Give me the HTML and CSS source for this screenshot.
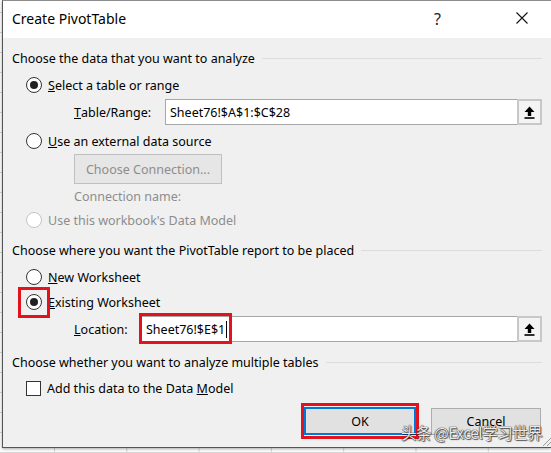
FILE: index.html
```html
<!DOCTYPE html>
<html>
<head>
<meta charset="utf-8">
<link rel="stylesheet" href="styles.css">
</head>
<body>
<div class="dialog">
  <div class="titlebar">
    <span class="title">Create PivotTable</span>
    <span class="help">?</span>
    <span class="close"><svg width="12" height="12" viewBox="0 0 12 12"><path d="M0.5 0.5 L11.5 11.5 M11.5 0.5 L0.5 11.5" stroke="#111" stroke-width="1.1" fill="none"/></svg></span>
  </div>
  <div class="body">
    <div class="group-h h1"><span>Choose the data that you want to analyze</span><i class="rule"></i></div>
    <div class="opt o1"><span class="radio on"></span><span><u>S</u>elect a table or range</span></div>
    <div class="field f-range">
      <span class="lbl lbl-range"><u>T</u>able/Range:</span>
      <div class="input">Sheet76!$A$1:$C$28</div>
      <span class="pick"><svg width="11" height="13" viewBox="0 0 11 13"><path d="M5.5 0.5 L10.5 6 H7.2 V10 H3.8 V6 H0.5 Z" fill="#000"/><rect x="0.5" y="11.2" width="10" height="1.6" fill="#000"/></svg></span>
    </div>
    <div class="opt o2"><span class="radio"></span><span><u>U</u>se an external data source</span></div>
    <div class="conn-row"><span class="btn-disabled">Choose Connection...</span></div>
    <div class="conn-name">Connection name:</div>
    <div class="opt o3 disabled"><span class="radio dis"></span><span>Use this workbook's Data Model</span></div>

    <div class="group-h h2"><span>Choose where you want the PivotTable report to be placed</span><i class="rule"></i></div>
    <div class="opt o4"><span class="radio"></span><span><u>N</u>ew Worksheet</span></div>
    <div class="opt o5"><span class="radio on mark"><i class="hl hl-radio"></i></span><span><u>E</u>xisting Worksheet</span></div>
    <div class="field f-loc">
      <span class="lbl lbl-loc"><u>L</u>ocation:</span>
      <div class="input loc-input"><i class="hl hl-loc"></i>Sheet76!$E$1<span class="caret"></span></div>
      <span class="pick"><svg width="11" height="13" viewBox="0 0 11 13"><path d="M5.5 0.5 L10.5 6 H7.2 V10 H3.8 V6 H0.5 Z" fill="#000"/><rect x="0.5" y="11.2" width="10" height="1.6" fill="#000"/></svg></span>
    </div>

    <div class="group-h h3"><span>Choose whether you want to analyze multiple tables</span><i class="rule"></i></div>
    <div class="opt o6"><span class="check"></span><span>Add this data to the Data <u>M</u>odel</span></div>

    <div class="footer">
      <span class="btn ok"><i class="hl hl-ok"></i>OK</span>
      <span class="btn cancel">Cancel</span>
    </div>
  </div>
  <span class="grip"><svg width="10" height="10" viewBox="0 0 10 10"><path d="M9 1 L1 9 M9 5 L5 9" stroke="#999" stroke-width="1" fill="none"/></svg></span>
  <span class="watermark">头条 @Excel学习世界</span>
</div>
</body>
</html>
```

FILE: styles.css
```css
html, body {
  margin: 0;
  padding: 0;
}
body {
  width: 551px;
  height: 453px;
  overflow: hidden;
  font-family: "Noto Sans", "Noto Sans CJK SC", sans-serif;
  font-size: 12.5px;
  color: #000;
  background-color: #fff;
  background-image:
    linear-gradient(to right, #d6d6d6 1px, transparent 1px),
    linear-gradient(to bottom, #d6d6d6 1px, transparent 1px);
  background-size: 72.3px 20px, 72.3px 20px;
  background-position: 54px 0, 0 12px;
}
.dialog {
  position: relative;
  margin: 0 0 0 2px;
  width: 549px;
  height: 448px;
  box-sizing: border-box;
  border-left: 1px solid #555;
  border-top: 1px solid #8c8c8c;
  border-bottom: 1px solid #555;
  background: #f0f0f0;
  display: flex;
  flex-direction: column;
  box-shadow: 0 1px 3px rgba(0,0,0,0.35);
}
.titlebar {
  height: 37px;
  background: #fff;
  display: flex;
  align-items: center;
  padding-left: 9px;
  flex: none;
}
.title {
  font-size: 14px;
  flex: 1;
  position: relative;
  top: -1px;
}
.help {
  font-size: 16px;
  color: #222;
  width: 12px;
  margin-right: 70px;
  position: relative;
  top: -1px;
}
.close {
  width: 12px;
  height: 12px;
  margin-right: 23px;
  display: flex;
  position: relative;
  top: -2px;
}
.body {
  padding: 8px 9px 0 9px;
  display: flex;
  flex-direction: column;
}
.group-h {
  height: 24px;
  display: flex;
  align-items: center;
  white-space: nowrap;
}
.rule {
  flex: 1;
  height: 1px;
  background: #dcdcdc;
  margin-left: 7px;
}
.opt {
  height: 24px;
  display: flex;
  align-items: center;
  padding-left: 14px;
  gap: 6px;
  white-space: nowrap;
}
.radio {
  position: relative;
  width: 16px;
  height: 16px;
  box-sizing: border-box;
  border: 1px solid #333;
  border-radius: 50%;
  background: #fff;
  flex: none;
}
.radio.on::after {
  content: "";
  position: absolute;
  left: 3px;
  top: 3px;
  width: 8px;
  height: 8px;
  border-radius: 50%;
  background: #222;
}
.radio.dis {
  border-color: #c4c4c4;
}
.check {
  width: 15px;
  height: 15px;
  box-sizing: border-box;
  border: 1px solid #333;
  background: #fff;
  flex: none;
}
.disabled {
  color: #8d8d8d;
}
.o1 { margin-top: 3px; }
.field {
  height: 26px;
  display: flex;
  align-items: stretch;
  padding-left: 62px;
}
.f-range { margin-top: 2px; }
.lbl {
  display: flex;
  align-items: center;
  flex: none;
}
.lbl-range { width: 91px; }
.lbl-loc { width: 67px; }
.input {
  position: relative;
  flex: 1;
  background: #fff;
  border: 1px solid #a6a6a6;
  border-right: none;
  display: flex;
  align-items: center;
  padding-left: 4px;
}
.pick {
  width: 25px;
  box-sizing: border-box;
  border: 2px solid #c8c8c8;
  background: #f4f4f4;
  display: flex;
  align-items: center;
  justify-content: center;
}
.o2 { margin-top: 4px; }
.conn-row {
  padding-left: 62px;
  margin-top: 1px;
  display: flex;
}
.btn-disabled {
  width: 148px;
  height: 30px;
  box-sizing: border-box;
  border: 1px solid #bfbfbf;
  background: #e6e6e6;
  color: #8d8d8d;
  display: flex;
  align-items: center;
  justify-content: center;
}
.conn-name {
  padding-left: 62px;
  height: 22px;
  line-height: 22px;
  margin-top: 2px;
  color: #8d8d8d;
}
.h2 { margin-top: 6px; }
.o4 { margin-top: 3px; }
.o5 { margin-top: 1px; }
.f-loc { margin-top: 2px; }
.loc-input { padding-left: 4px; }
.caret {
  display: inline-block;
  width: 1px;
  height: 17px;
  background: #000;
  margin-left: 1px;
}
.h3 { margin-top: 8px; }
.o6 { margin-top: 2px; }
.footer {
  display: flex;
  justify-content: flex-end;
  align-items: flex-end;
  gap: 15px;
  margin-top: 7px;
  padding-right: 1px;
}
.btn {
  position: relative;
  height: 28px;
  box-sizing: border-box;
  background: #e1e1e1;
  display: flex;
  align-items: center;
  justify-content: center;
}
.ok {
  width: 112px;
  border: 2px solid #0078d7;
}
.cancel {
  width: 110px;
  height: 27px;
  border: 1px solid #adadad;
}
.hl {
  position: absolute;
  border: 3px solid #e3131d;
  box-sizing: border-box;
  pointer-events: none;
}
.hl-radio {
  left: -9px;
  top: -8px;
  width: 32px;
  height: 31px;
}
.hl-loc {
  left: -3px;
  top: -4px;
  width: 93px;
  height: 31px;
}
.hl-ok {
  left: -5px;
  top: -6px;
  width: 118px;
  height: 36px;
}
.grip {
  position: absolute;
  right: -1px;
  bottom: 0;
  width: 10px;
  height: 10px;
  display: flex;
}
.watermark {
  position: absolute;
  left: 398px;
  top: 420px;
  font-family: "Noto Sans CJK SC", "Noto Sans", sans-serif;
  font-size: 15.5px;
  color: rgba(255,255,255,0.92);
  letter-spacing: -0.5px;
  text-shadow: 0 0 1px #222, 0 0 1px #222, 1px 1px 1px rgba(0,0,0,0.6);
  white-space: nowrap;
}
```
